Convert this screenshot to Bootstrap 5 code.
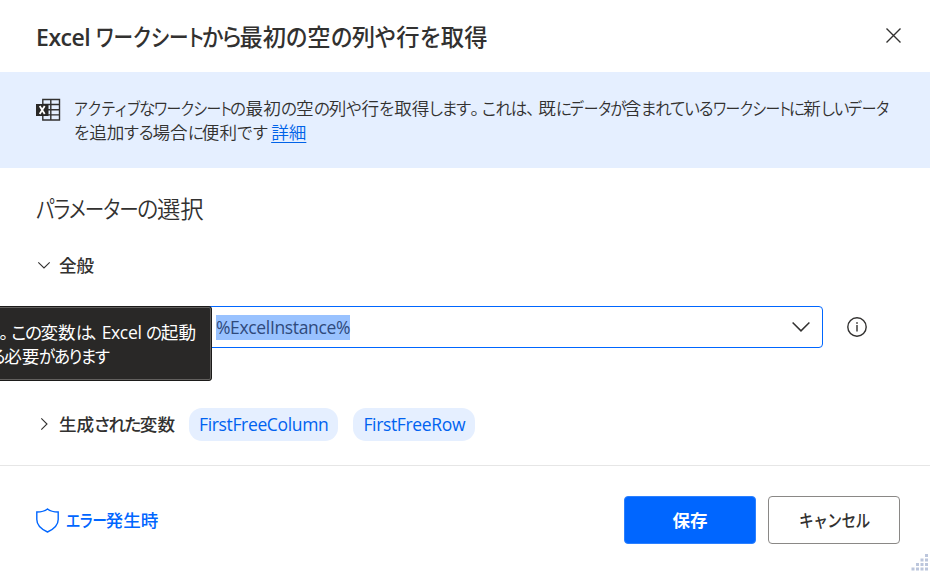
<!DOCTYPE html>
<html lang="ja">
<head>
<meta charset="utf-8">
<meta name="viewport" content="width=device-width, initial-scale=1">
<title>Excel ワークシートから最初の空の列や行を取得</title>
<link href="https://cdn.jsdelivr.net/npm/bootstrap@5.3.0/dist/css/bootstrap.min.css" rel="stylesheet">
<style>
body{font-family:"Noto Sans","Noto Sans CJK JP",sans-serif;font-size:17.6px;line-height:24px;color:#323130;height:574px;overflow:hidden;font-feature-settings:"palt"}
.latin{font-family:"Open Sans","Noto Sans CJK JP",sans-serif;font-size:17.5px;letter-spacing:-.02em}
.kana{letter-spacing:-.085em}
/* Condensed kana: --w is the advance of the word, --s the horizontal scale */
.seg{--s:.94;--w:.86em;display:inline-block;white-space:nowrap;width:calc(var(--w) / var(--s));margin-right:calc(var(--w) - var(--w) / var(--s));transform:scaleX(var(--s));transform-origin:left;letter-spacing:-.08em;text-align:justify;text-align-last:justify}
.kata{--s:.84;letter-spacing:-.09em}
.punct{display:inline-block;width:.68em;text-align:left}
.w-sheet{--w:4.35em}.w-data{--w:2.26em}.w-active{--w:3.68em}.w-param{--w:4.33em}.w-error{--w:2.25em}.w-cancel{--w:4em}
.w-kara{--w:1.6em}.w-shimasu{--w:2.32em}.w-koreha{--w:2.5em}.w-mareteiru{--w:4.05em}.w-shii{--w:1.54em}.w-suru{--w:1.6em}.w-desu{--w:1.68em}.w-arimasu{--w:3.9em}.w-ni{--w:.8em}
.dlg-head{height:72px;padding:0 28px 0 36px}
.dlg-title{font-size:23.3px;font-weight:500;line-height:32px;font-family:"Noto Sans CJK JP",sans-serif}
.dlg-title .latin{font-family:"Open Sans",sans-serif;font-size:23px;font-weight:600}
.dlg-title .seg{--w:.91em}
.dlg-title .w-sheet{--w:4.55em}
.dlg-title .w-kara{--w:1.62em}
.banner{height:96px;background:#e5efff;padding:24px 36px 0}
.banner-text{margin-left:13px;font-weight:350}
.detail{color:#0062e8;text-underline-offset:3px}
.dlg-body{height:298px;border-bottom:1px solid #e6e6e6;padding:24px 36px 0}
.subhead{font-size:23.3px;line-height:34px;font-weight:350;margin:0}
.group-row{height:34px}
.group-general{margin-top:22px}
.group-vars{margin-top:59px}
.group-name{font-weight:500;margin-left:7px}
.field-row{margin-top:24px;height:42px}
.combo{width:623px;height:42px;margin-left:164px;border:1px solid #0066ff;border-radius:4px;padding:0 12px 0 15px}
.picked{background:#99c2ff;color:#2f4a7c;height:25px;line-height:25px}
.tip{left:-40px;top:306px;width:252px;height:75px;background:#292827;color:#fff;border:1px solid #1c1b1a;outline:1px solid #62605e;outline-offset:-2px;border-radius:3px;padding:13px 15px 0 0;overflow:hidden}
.tip-second{padding-right:88px}
.chips{margin-left:14px;gap:15px}
.chip{height:33px;border-radius:13px;background:#e5efff;color:#0062f0;padding:0 10px}
.dlg-foot{height:108px;padding:0 30px 0 36px}
.on-error{color:#0066ff;font-weight:500;gap:7px}
.act{width:132px;height:48px;border-radius:4px;font-size:17.5px;font-weight:500;padding:0}
.act-save{background:#0066ff;color:#fff;border:1px solid #2b80ff;font-weight:700}
.act-cancel{background:#fff;color:#323130;border:1px solid #8a8886}
.grip{right:2px;bottom:3px}
</style>
<script src="https://cdn.jsdelivr.net/npm/bootstrap@5.3.0/dist/js/bootstrap.bundle.min.js"></script>
</head>
<body class="bg-white position-relative">
<header class="dlg-head d-flex align-items-center justify-content-between">
<h1 class="dlg-title m-0 text-nowrap"><span class="latin">Excel </span><span class="seg kata w-sheet">ワークシート</span><span class="seg w-kara">から</span>最初<span class="seg">の</span>空<span class="seg">の</span>列<span class="seg">や</span>行<span class="seg">を</span>取得</h1>
<svg width="18" height="18" viewBox="0 0 18 18" fill="none" stroke="#323130" stroke-width="1.4"><path d="M2.500 1.500l14 14M16.500 1.500l-14 14"/></svg>
</header>
<section class="banner d-flex align-items-start">
<svg class="flex-shrink-0" width="25" height="28" viewBox="0 0 25 28"><path d="M6.800 3.500h16.700v20.500H6.800zM14.800 3.500v20.500M6.800 8.500h16.700M6.800 13.700h16.700M6.800 18.900h16.700" fill="none" stroke="#323130" stroke-width="1.4"/><path d="M0 8h12.500v12H0z" fill="#292827"/><path d="M3.700 10l5 8M8.700 10l-5 8" stroke="#fff" stroke-width="1.8"/></svg>
<div class="banner-text text-nowrap"><div><span class="seg kata w-active">アクティブ</span><span class="seg">な</span><span class="seg kata w-sheet">ワークシート</span><span class="seg">の</span>最初<span class="seg">の</span>空<span class="seg">の</span>列<span class="seg">や</span>行<span class="seg">を</span>取得<span class="seg w-shimasu">します</span><span class="punct">。</span><span class="seg w-koreha">これは</span><span class="punct">、</span>既<span class="seg w-ni">に</span><span class="seg kata w-data">データ</span><span class="seg w-ni">が</span>含<span class="seg w-mareteiru">まれている</span><span class="seg kata w-sheet">ワークシート</span><span class="seg w-ni">に</span>新<span class="seg w-shii">しい</span><span class="seg kata w-data">データ</span></div>
<div><span class="seg">を</span>追加<span class="seg w-suru">する</span>場合<span class="seg w-ni">に</span>便利<span class="seg w-desu">です</span> <a class="detail" href="#">詳細</a></div></div>
</section>
<main class="dlg-body">
<h2 class="subhead"><span class="seg kata w-param">パラメーター</span><span class="seg">の</span>選択</h2>
<div class="group-row group-general d-flex align-items-center"><svg width="16" height="16" viewBox="0 0 16 16" fill="none" stroke="#323130" stroke-width="1.1"><path d="M2.3 5.3L8 11l5.7-5.7"/></svg><span class="group-name">全般</span></div>
<div class="field-row d-flex align-items-center">
<div class="combo d-flex align-items-center justify-content-between"><span class="picked latin">%ExcelInstance%</span><svg width="18" height="12" viewBox="0 0 18 12" fill="none" stroke="#323130" stroke-width="1.5"><path d="M.6 1.5L9 9.9l8.4-8.4"/></svg></div>
<svg class="ms-4" width="20" height="20" viewBox="0 0 20 20"><circle cx="10" cy="10" r="9.2" fill="none" stroke="#323130" stroke-width="1.4"/><path d="M9.3 8h1.4v6.500H9.3zM9.2 5.3h1.6v1.500H9.2z" fill="#323130"/></svg>
</div>
<div class="group-row group-vars d-flex align-items-center"><svg width="16" height="16" viewBox="0 0 16 16" fill="none" stroke="#323130" stroke-width="1.1"><path d="M5.3 2.3L11 8l-5.7 5.7"/></svg><span class="group-name">生成<span class="kana">された</span>変数</span><div class="chips d-flex"><span class="chip latin d-flex align-items-center">FirstFreeColumn</span><span class="chip latin d-flex align-items-center">FirstFreeRow</span></div></div>
</main>
<footer class="dlg-foot d-flex align-items-center justify-content-between">
<div class="on-error d-flex align-items-center"><svg width="23" height="25" viewBox="0 0 23 25" fill="none" stroke="#0066ff" stroke-width="1.4"><path d="M11.500 1C9 3 5.500 4 .8 4v7.500c0 5.500 4.500 9.700 10.700 12.500 6.200-2.800 10.700-7 10.700-12.500V4C17.500 4 14 3 11.500 1z"/></svg><span><span class="seg kata w-error">エラー</span>発生時</span></div>
<div class="d-flex gap-2"><button class="btn act act-save">保存</button><button class="btn act act-cancel ms-1"><span class="seg kata w-cancel">キャンセル</span></button></div>
</footer>
<div class="tip position-absolute text-end text-nowrap"><div><span class="punct">。</span><span class="kana">この</span>変数<span class="seg w-ni">は</span><span class="punct">、</span><span class="latin">Excel </span> <span class="seg">の</span>起動</div><div class="tip-second"><span class="kana">る</span>必要<span class="seg w-arimasu">があります</span></div></div>
<svg class="grip position-absolute" width="17" height="17" viewBox="0 0 17 17" fill="#bcc6dc"><path d="M14 0h3v3h-3zM14 4.500h3v3h-3zM14 9h3v3h-3zM14 13.500h3v3h-3zM9.500 4.500h3v3h-3zM9.500 9h3v3h-3zM9.500 13.500h3v3h-3zM5 9h3v3H5zM5 13.500h3v3H5zM.5 13.500h3v3h-3z"/></svg>
</body>
</html>
